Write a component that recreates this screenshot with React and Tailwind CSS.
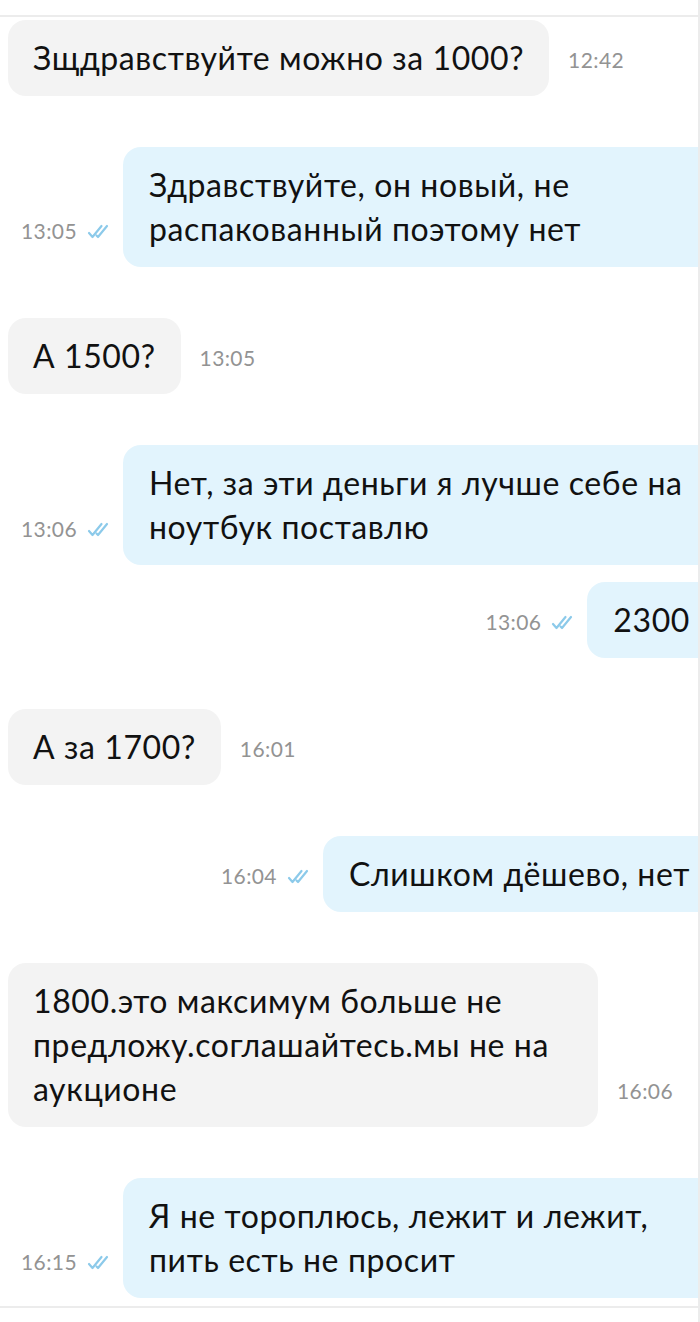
import React from 'react';

const messages = [
  { from: 'them', text: 'Зщдравствуйте можно за 1000?', time: '12:42' },
  { from: 'me', text: 'Здравствуйте, он новый, не распакованный поэтому нет', time: '13:05' },
  { from: 'them', text: 'А 1500?', time: '13:05' },
  { from: 'me', text: 'Нет, за эти деньги я лучше себе на ноутбук поставлю', time: '13:06' },
  { from: 'me', text: '2300', time: '13:06' },
  { from: 'them', text: 'А за 1700?', time: '16:01' },
  { from: 'me', text: 'Слишком дёшево, нет', time: '16:04' },
  { from: 'them', text: '1800.это максимум больше не предложу.соглашайтесь.мы не на аукционе', time: '16:06' },
  { from: 'me', text: 'Я не тороплюсь, лежит и лежит, пить есть не просит', time: '16:15' },
];

function ReadTicks() {
  return (
    <svg width="27" height="15" viewBox="0 0 27 15" fill="none" stroke="#8ccaea" strokeWidth="2.2" strokeLinecap="round" strokeLinejoin="round">
      <path d="M2 9 L5.5 13 L14.5 2" />
      <path d="M9.5 11.5 L11 13 L20 2" />
    </svg>
  );
}

function Message({ msg, gap }) {
  if (msg.from === 'me') {
    return (
      <div className={`flex justify-end items-end ${gap}`}>
        <div className="flex items-baseline gap-[10px] mr-[9px] mb-[24px]">
          <span className="text-[21px] leading-6 tracking-[0.4px] text-[#939393]">{msg.time}</span>
          <ReadTicks />
        </div>
        <div className="max-w-[591px] bg-[#e2f4fd] rounded-[18px] pl-[26px] pr-[24px] py-4 text-[32px] leading-[44px] tracking-[0.6px] text-[#111]">
          {msg.text}
        </div>
      </div>
    );
  }
  return (
    <div className={`flex items-end ${gap}`}>
      <div className="max-w-[590px] bg-[#f3f3f3] rounded-[18px] px-[25px] py-4 text-[32px] leading-[44px] tracking-[0.6px] text-[#111]">
        {msg.text}
      </div>
      <span className="ml-[19px] mb-[24px] text-[21px] leading-6 tracking-[0.4px] text-[#939393]">{msg.time}</span>
    </div>
  );
}

export default function App() {
  return (
    <div className="w-[700px] h-[1322px] bg-white border-r-2 border-[#ececec] pt-[15px] font-['Lato','Noto_Sans',sans-serif]">
      <div className="border-t-2 border-b-2 border-[#ececec] overflow-hidden">
        <div className="w-[714px] pl-2 pt-[3px] pb-2">
          {messages.map((m, i) => {
            let gap = '';
            if (i > 0) gap = messages[i - 1].from === m.from ? 'mt-[17px]' : 'mt-[51px]';
            return <Message key={i} msg={m} gap={gap} />;
          })}
        </div>
      </div>
    </div>
  );
}
